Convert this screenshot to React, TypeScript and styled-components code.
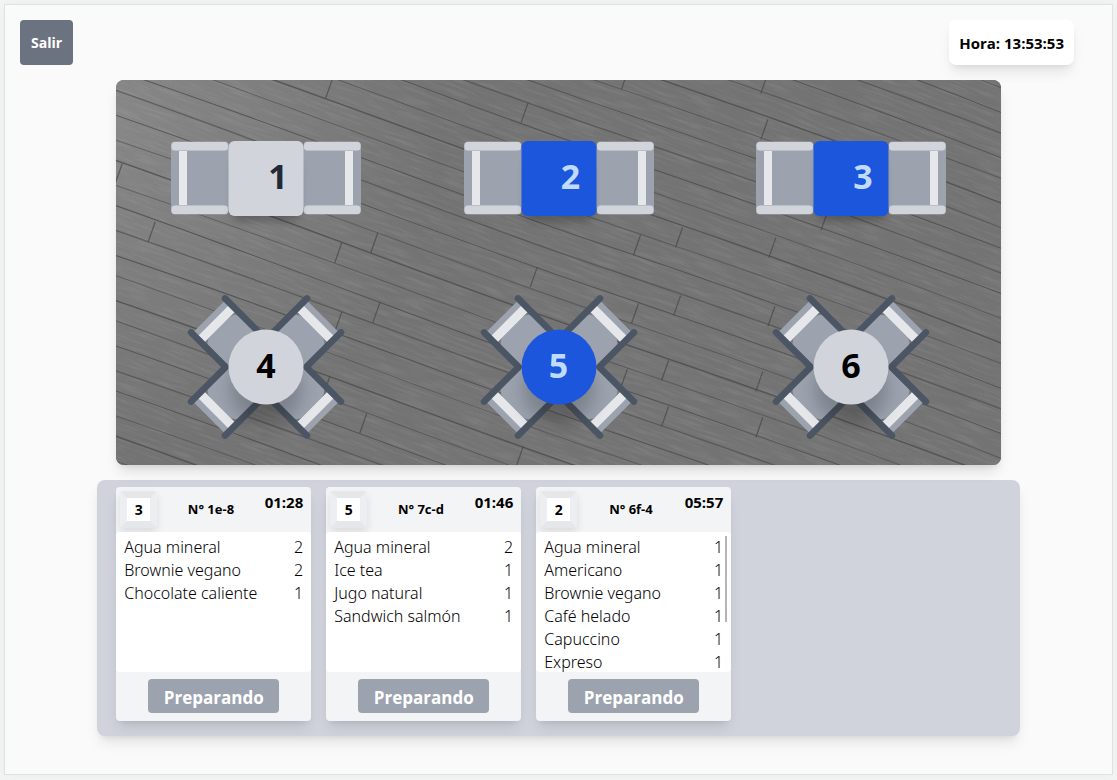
import React from "react";
import styled, { createGlobalStyle } from "styled-components";

const GlobalStyle = createGlobalStyle`
  *, *::before, *::after { box-sizing: border-box; }
  body {
    margin: 0;
    background: #f3f4f4;
    color: #000;
    font-family: "Open Sans", "Noto Sans", sans-serif;
  }
  button { font-family: inherit; cursor: pointer; }
`;

const Page = styled.div`
  min-height: 100vh;
  padding: 4px 4px 5px;
  display: flex;
`;

const Frame = styled.main`
  flex: 1;
  display: flex;
  flex-direction: column;
  align-items: center;
  gap: 15px;
  padding: 15px 0 37px;
  background: #fafafa;
  border: 1px solid #dfe2e2;
  box-shadow: 0 0 12px rgba(0, 0, 0, 0.04);
`;

const TopBar = styled.header`
  align-self: stretch;
  display: flex;
  justify-content: space-between;
  padding: 0 38px 0 15px;
`;

const ExitButton = styled.button`
  height: 45px;
  padding: 0 11px;
  border: 0;
  border-radius: 4px;
  background: #6b7280;
  color: #fff;
  font-size: 14px;
  font-weight: 700;
`;

const Clock = styled.div`
  height: 45px;
  padding: 0 10px;
  display: flex;
  align-items: center;
  border-radius: 7px;
  background: #fff;
  box-shadow: 0 9px 14px -3px rgba(0, 0, 0, 0.1), 0 4px 6px -4px rgba(0, 0, 0, 0.1);
  font-size: 15px;
  font-weight: 700;
`;

const Floor = styled.section`
  position: relative;
  width: 80%;
  min-height: 385px;
  padding: 4px;
  display: grid;
  grid-template-columns: repeat(3, 1fr);
  grid-template-rows: repeat(2, 1fr);
  place-items: center;
  border-radius: 8px;
  background: #727272;
  box-shadow: 0 9px 14px -3px rgba(0, 0, 0, 0.12), 0 4px 6px -4px rgba(0, 0, 0, 0.1);
`;

const WoodSvg = styled.svg`
  position: absolute;
  inset: 0;
  width: 100%;
  height: 100%;
  border-radius: 8px;
`;

const TableButton = styled.button`
  position: relative;
  display: grid;
  place-items: center;
  padding: 0;
  border: 0;
  background: none;
`;

const Furniture = styled.svg`
  grid-area: 1 / 1;
  display: block;
  overflow: visible;
`;

const TableNumber = styled.span<{ $color: string; $shift?: boolean }>`
  grid-area: 1 / 1;
  position: relative;
  padding-left: ${(p) => (p.$shift ? "24px" : "0")};
  padding-bottom: 4px;
  color: ${(p) => p.$color};
  font-size: 34px;
  line-height: 40px;
  font-weight: 700;
`;

const OrdersPanel = styled.section`
  width: 83.333%;
  min-height: 256px;
  display: flex;
  align-items: flex-start;
  gap: 15px;
  padding: 7px 19px 15px;
  border-radius: 8px;
  background: #d0d3dc;
  box-shadow: 0 9px 14px -3px rgba(0, 0, 0, 0.1), 0 4px 6px -4px rgba(0, 0, 0, 0.1);
`;

const Card = styled.article`
  width: 195px;
  border-radius: 4px;
  background: #f3f4f6;
  box-shadow: 0 9px 14px -3px rgba(0, 0, 0, 0.1), 0 4px 6px -4px rgba(0, 0, 0, 0.1);
`;

const CardHeader = styled.header`
  height: 45px;
  padding: 4px 8px 4px 4px;
  display: flex;
  justify-content: space-between;
`;

const TableBadge = styled.button`
  width: 37px;
  height: 37px;
  padding: 0;
  border: 7px solid;
  border-color: #e5e7eb #eceef1 #e5e7eb #eceef1;
  border-radius: 4px;
  background: #fff;
  box-shadow: 0 4px 8px rgba(0, 0, 0, 0.1);
  font-size: 14px;
  line-height: 23px;
  font-weight: 700;
`;

const OrderCode = styled.span`
  font-size: 13px;
  line-height: 37px;
  font-weight: 700;
`;

const Elapsed = styled.time`
  font-size: 15px;
  line-height: 22px;
  font-weight: 700;
`;

const CardBody = styled.div`
  position: relative;
  height: 140px;
  border-radius: 4px;
  background: #fff;
`;

const ItemList = styled.ul`
  height: 100%;
  margin: 0;
  padding: 4px 8px 0;
  overflow: hidden;
  list-style: none;
`;

const Item = styled.li`
  display: flex;
  justify-content: space-between;
  font-family: "Noto Sans", "Open Sans", sans-serif;
  font-size: 16px;
  line-height: 23px;
  font-weight: 300;
`;

const ScrollThumb = styled.span`
  position: absolute;
  top: 4px;
  right: 4px;
  width: 2px;
  height: 86px;
  background: #b5b5b5;
`;

const CardFooter = styled.footer`
  height: 49px;
  padding-top: 7px;
  display: flex;
  justify-content: center;
`;

const StatusButton = styled.button`
  width: 131px;
  height: 34px;
  padding: 2px 0 0;
  border: 0;
  border-radius: 4px;
  background: #9ca3af;
  color: #fff;
  font-size: 17px;
  font-weight: 700;
`;

const SLOPE = 0.36;
const PLANK = 23;
const FIRST = -333;
const seams = Array.from({ length: 32 }, (_, i) => FIRST + i * PLANK);
const joints: [number, number][] = [
  [217, 0], [412, 18], [421, 180], [226, 155], [40, 150], [7, 93], [264, 213],
  [226, 222], [214, 285], [251, 323], [407, 360], [262, 147], [512, 0], [651, 0],
  [651, 42], [566, 142], [524, 152], [659, 155], [564, 211], [522, 221],
  [658, 225], [552, 274], [511, 283], [646, 288], [552, 321], [646, 336], [711, 140],
];

function jointPath([x, y]: [number, number]) {
  const row = Math.round((y - SLOPE * x - FIRST) / PLANK);
  const top = FIRST + row * PLANK + SLOPE * x;
  return `M${x} ${top.toFixed(1)}l-7 20`;
}

function seamPath(c: number, i: number) {
  const y = (x: number, o: number) => (c + SLOPE * x + o).toFixed(1);
  const o = ((i * 7) % 5) - 2;
  return `M-5 ${y(-5, o)}C200 ${y(200, -3)} 350 ${y(350, 3)} 480 ${y(480, 0)}S760 ${y(760, -4)} 900 ${y(900, o)}`;
}

function WoodFloor() {
  return (
    <WoodSvg viewBox="0 0 885 384" preserveAspectRatio="xMidYMid slice" aria-hidden="true">
      <defs>
        <radialGradient id="light" gradientUnits="userSpaceOnUse" cx="0" cy="30" r="330">
          <stop offset="0" stopColor="#888888" />
          <stop offset="1" stopColor="#737373" />
        </radialGradient>
        <filter id="grain" x="0" y="0" width="100%" height="100%">
          <feTurbulence type="fractalNoise" baseFrequency="0.018 0.28" numOctaves="4" seed="8" />
          <feColorMatrix values="0 0 0 0 0.22  0 0 0 0 0.22  0 0 0 0 0.22  1.5 0 0 0 -0.62" />
        </filter>
        <filter id="lightGrain" x="0" y="0" width="100%" height="100%">
          <feTurbulence type="fractalNoise" baseFrequency="0.03 0.4" numOctaves="3" seed="3" />
          <feColorMatrix values="0 0 0 0 0.62  0 0 0 0 0.62  0 0 0 0 0.62  1.4 0 0 0 -0.6" />
        </filter>
      </defs>
      <rect width="885" height="384" fill="url(#light)" />
      <g transform="rotate(20 442 192)">
        <rect x="-80" y="-180" width="1050" height="750" filter="url(#grain)" opacity="0.35" />
        <rect x="-80" y="-180" width="1050" height="750" filter="url(#lightGrain)" opacity="0.2" />
      </g>
      <g fill="none" stroke="#484848">
        {seams.map((c, i) => (
          <path key={c} d={seamPath(c, i)} strokeWidth={i % 3 ? 1 : 1.4} opacity={i % 2 ? 0.6 : 0.75} />
        ))}
        {joints.map((j) => (
          <path key={j.join()} d={jointPath(j)} strokeWidth="1.2" opacity="0.75" />
        ))}
      </g>
    </WoodSvg>
  );
}

function Armchair() {
  return (
    <g>
      <rect x="0" y="7" width="58" height="60" fill="#9ca3af" />
      <rect x="8" y="9" width="8" height="56" fill="#e5e7eb" />
      <rect x="0" y="0.5" width="57.5" height="9.5" rx="4" fill="#a3a8b1" />
      <rect x="0" y="64" width="57.5" height="9.5" rx="4" fill="#a3a8b1" />
      <rect x="0.5" y="1" width="56.5" height="8.4" rx="3.5" fill="#d1d5db" />
      <rect x="0.5" y="64.6" width="56.5" height="8.4" rx="3.5" fill="#d1d5db" />
    </g>
  );
}

function SquareTable({ fill }: { fill: string }) {
  return (
    <Furniture width="190" height="75" viewBox="0 0 190 75" aria-hidden="true">
      <defs>
        <filter id="softSquare" x="-50%" y="-50%" width="200%" height="200%">
          <feGaussianBlur stdDeviation="5" />
        </filter>
      </defs>
      <Armchair />
      <g transform="translate(190 0) scale(-1 1)">
        <Armchair />
      </g>
      <rect x="62" y="18" width="66" height="62" rx="6" opacity="0.25" filter="url(#softSquare)" />
      <rect x="57.5" y="0" width="75" height="75" rx="6" fill={fill} />
    </Furniture>
  );
}

function DiagonalChair() {
  return (
    <g transform="matrix(-0.7071 -0.7071 0.7071 -0.7071 0 0)">
      <rect x="61" y="-27" width="15" height="45" fill="#9ca3af" />
      <rect x="22" y="-27" width="39" height="45" rx="9" fill="#9ca3af" />
      <rect x="61" y="-26" width="9" height="43" fill="#e5e7eb" />
      <path d="M29 -28.500H77.500M29 19.500H77.500" stroke="#4b5563" strokeWidth="6.500" strokeLinecap="round" />
    </g>
  );
}

function RoundTable({ fill }: { fill: string }) {
  return (
    <Furniture width="156" height="144" viewBox="-78 -72 156 144" aria-hidden="true">
      <defs>
        <filter id="softRound" x="-50%" y="-50%" width="200%" height="200%">
          <feGaussianBlur stdDeviation="9" />
        </filter>
      </defs>
      {["1 1", "-1 1", "1 -1", "-1 -1"].map((s) => (
        <g key={s} transform={`scale(${s})`}>
          <DiagonalChair />
        </g>
      ))}
      <circle cy="22" r="36" opacity="0.2" filter="url(#softRound)" />
      <circle r="37.500" fill={fill} />
    </Furniture>
  );
}

const FREE = "#d1d5db";
const BUSY = "#1c56dc";

const tables = [
  { id: 1, round: false, busy: false },
  { id: 2, round: false, busy: true },
  { id: 3, round: false, busy: true },
  { id: 4, round: true, busy: false },
  { id: 5, round: true, busy: true },
  { id: 6, round: true, busy: false },
];

const orders = [
  {
    table: 3,
    code: "N° 1e-8",
    time: "01:28",
    items: [["Agua mineral", 2], ["Brownie vegano", 2], ["Chocolate caliente", 1]],
  },
  {
    table: 5,
    code: "N° 7c-d",
    time: "01:46",
    items: [["Agua mineral", 2], ["Ice tea", 1], ["Jugo natural", 1], ["Sandwich salmón", 1]],
  },
  {
    table: 2,
    code: "N° 6f-4",
    time: "05:57",
    scroll: true,
    items: [
      ["Agua mineral", 1], ["Americano", 1], ["Brownie vegano", 1],
      ["Café helado", 1], ["Capuccino", 1], ["Expreso", 1],
    ],
  },
];

export default function App() {
  return (
    <>
      <GlobalStyle />
      <Page>
        <Frame>
          <TopBar>
            <ExitButton type="button">Salir</ExitButton>
            <Clock>Hora: 13:53:53</Clock>
          </TopBar>
          <Floor>
            <WoodFloor />
            {tables.map((t) => (
              <TableButton key={t.id} type="button">
                {t.round ? (
                  <RoundTable fill={t.busy ? BUSY : FREE} />
                ) : (
                  <SquareTable fill={t.busy ? BUSY : FREE} />
                )}
                <TableNumber
                  $shift={!t.round}
                  $color={t.busy ? "#bfdbfe" : t.round ? "#000" : "#1f2937"}
                >
                  {t.id}
                </TableNumber>
              </TableButton>
            ))}
          </Floor>
          <OrdersPanel>
            {orders.map((o) => (
              <Card key={o.code}>
                <CardHeader>
                  <TableBadge type="button">{o.table}</TableBadge>
                  <OrderCode>{o.code}</OrderCode>
                  <Elapsed>{o.time}</Elapsed>
                </CardHeader>
                <CardBody>
                  <ItemList>
                    {o.items.map(([name, qty]) => (
                      <Item key={name}>
                        <span>{name}</span>
                        <span>{qty}</span>
                      </Item>
                    ))}
                  </ItemList>
                  {o.scroll && <ScrollThumb />}
                </CardBody>
                <CardFooter>
                  <StatusButton type="button">Preparando</StatusButton>
                </CardFooter>
              </Card>
            ))}
          </OrdersPanel>
        </Frame>
      </Page>
    </>
  );
}
